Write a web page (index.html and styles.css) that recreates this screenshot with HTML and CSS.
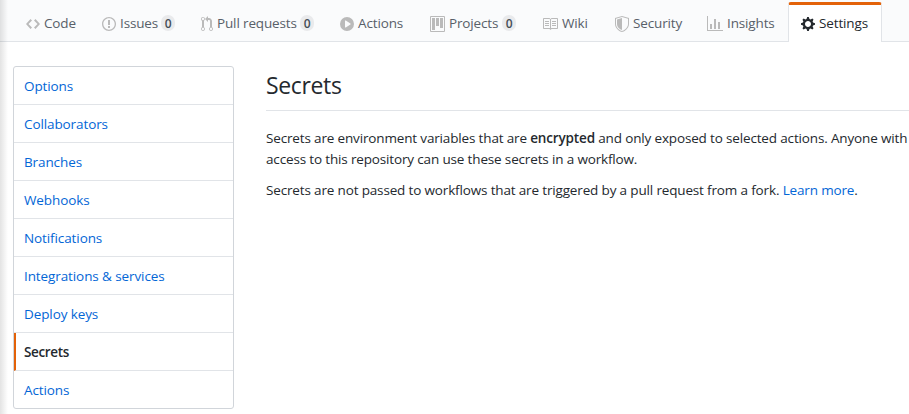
FILE: index.html
```html
<!DOCTYPE html>
<html lang="en">
<head>
<meta charset="utf-8">
<title>Secrets</title>
<link rel="stylesheet" href="styles.css">
</head>
<body>
<nav class="tabs">
  <a class="tab"><svg width="14" height="16" viewBox="0 0 14 16"><path d="M9.5 3L8 4.5 11.5 8 8 11.5 9.5 13 14 8 9.5 3zm-5 0L0 8l4.5 5L6 11.5 2.5 8 6 4.5 4.5 3z"/></svg><span>Code</span></a>
  <a class="tab"><svg width="14" height="16" viewBox="0 0 14 16"><path fill-rule="evenodd" d="M7 2.3c3.14 0 5.7 2.56 5.7 5.7s-2.56 5.7-5.7 5.7A5.71 5.71 0 0 1 1.3 8c0-3.14 2.56-5.7 5.7-5.7zM7 1C3.14 1 0 4.14 0 8s3.14 7 7 7 7-3.14 7-7-3.14-7-7-7zm1 3H6v5h2V4zm0 6H6v2h2v-2z"/></svg><span>Issues</span><b class="count">0</b></a>
  <a class="tab"><svg width="12" height="16" viewBox="0 0 12 16"><path fill-rule="evenodd" d="M11 11.28V5c-.03-.78-.34-1.47-.94-2.06C9.46 2.35 8.78 2.03 8 2H7V0L4 3l3 3V4h1c.27.02.48.11.69.31.21.2.3.42.31.69v6.28A1.993 1.993 0 0 0 10 15a1.993 1.993 0 0 0 1-3.72zm-1 2.92c-.66 0-1.2-.55-1.2-1.2 0-.65.55-1.2 1.2-1.2.65 0 1.2.55 1.2 1.2 0 .65-.55 1.2-1.2 1.2zM4 3c0-1.11-.89-2-2-2a1.993 1.993 0 0 0-1 3.72v6.56A1.993 1.993 0 0 0 2 15a1.993 1.993 0 0 0 1-3.72V4.72c.59-.34 1-.98 1-1.72zm-.8 10c0 .66-.55 1.2-1.2 1.2-.65 0-1.2-.55-1.2-1.2 0-.65.55-1.2 1.2-1.2.65 0 1.2.55 1.2 1.2zM2 4.2C1.34 4.2.8 3.65.8 3c0-.65.55-1.2 1.2-1.2.65 0 1.2.55 1.2 1.2 0 .65-.55 1.2-1.2 1.2z"/></svg><span>Pull requests</span><b class="count">0</b></a>
  <a class="tab"><svg width="14" height="16" viewBox="0 0 14 16"><path fill-rule="evenodd" d="M14 8A7 7 0 1 1 0 8a7 7 0 0 1 14 0zm-8.223 3.482l4.599-3.066a.5.5 0 0 0 0-.832L5.777 4.518A.5.5 0 0 0 5 4.934v6.132a.5.5 0 0 0 .777.416z"/></svg><span>Actions</span></a>
  <a class="tab"><svg width="15" height="16" viewBox="0 0 15 16"><path fill-rule="evenodd" d="M10 12h3V2h-3v10zm-4-2h3V2H6v8zm-4 4h3V2H2v12zm-1 1h13V1H1v14zM14 0H1a1 1 0 0 0-1 1v14a1 1 0 0 0 1 1h13a1 1 0 0 0 1-1V1a1 1 0 0 0-1-1z"/></svg><span>Projects</span><b class="count">0</b></a>
  <a class="tab"><svg width="16" height="16" viewBox="0 0 16 16"><path fill-rule="evenodd" d="M3 5h4v1H3V5zm0 3h4V7H3v1zm0 2h4V9H3v1zm11-5h-4v1h4V5zm0 2h-4v1h4V7zm0 2h-4v1h4V9zm2-6v9c0 .55-.45 1-1 1H9.5l-1 1-1-1H2c-.55 0-1-.45-1-1V3c0-.55.45-1 1-1h5.5l1 1 1-1H15c.55 0 1 .45 1 1zm-8 .5L7.5 3H2v9h6V3.5zm7-.5H9.5l-.5.5V12h6V3z"/></svg><span>Wiki</span></a>
  <a class="tab"><svg width="14" height="16" viewBox="0 0 14 16"><path fill-rule="evenodd" d="M0 2l7-2 7 2v6.02C14 12.69 8.69 16 7 16c-1.69 0-7-3.31-7-7.98V2zm1 .75L7 1l6 1.75v5.268C13 12.104 8.449 15 7 15c-1.449 0-6-2.896-6-6.982V2.75zm1 .75L7 2v12c-1.207 0-5-2.482-5-5.985V3.5z"/></svg><span>Security</span></a>
  <a class="tab"><svg width="16" height="16" viewBox="0 0 16 16"><path d="M16 14v1H0V0h1v14h15zM5 13H3V8h2v5zm4 0H7V3h2v10zm4 0h-2V6h2v7z"/></svg><span>Insights</span></a>
  <a class="tab selected"><svg width="14" height="16" viewBox="0 0 14 16"><path fill-rule="evenodd" d="M14 8.77v-1.6l-1.94-.64-.45-1.09.88-1.84-1.13-1.13-1.81.91-1.09-.45-.69-1.92h-1.6l-.63 1.94-1.11.45-1.84-.88-1.13 1.13.91 1.81-.45 1.09L0 7.23v1.59l1.94.64.45 1.09-.88 1.84 1.13 1.13 1.81-.91 1.09.45.69 1.92h1.59l.63-1.94 1.11-.45 1.84.88 1.13-1.13-.92-1.81.47-1.09L14 8.75v.02zM7 11c-1.66 0-3-1.34-3-3s1.34-3 3-3 3 1.34 3 3-1.34 3-3 3z"/></svg><span>Settings</span></a>
</nav>
<div class="layout">
  <aside class="menu">
    <a>Options</a>
    <a>Collaborators</a>
    <a>Branches</a>
    <a>Webhooks</a>
    <a>Notifications</a>
    <a>Integrations &amp; services</a>
    <a>Deploy keys</a>
    <a class="current">Secrets</a>
    <a>Actions</a>
  </aside>
  <main class="content">
    <h1>Secrets</h1>
    <p>Secrets are environment variables that are <strong>encrypted</strong> and only exposed to selected actions. Anyone with<br>access to this repository can use these secrets in a workflow.</p>
    <p>Secrets are not passed to workflows that are triggered by a pull request from a fork. <a>Learn more</a>.</p>
  </main>
</div>
<div class="edge"></div>
</body>
</html>
```
FILE: styles.css
```css
* { box-sizing: border-box; }
body {
  margin: 0;
  height: 414px;
  overflow: hidden;
  background: #fff;
  color: #24292e;
  font: 13.5px/21px "Open Sans", "Noto Sans", sans-serif;
}
.tabs {
  display: grid;
  grid-template-columns: 76px 99px 139px 90px 112px 73px 92px 94px 94px;
  height: 42px;
  padding: 2px 0 0 13px;
  background: #fafbfc;
  border-bottom: 1px solid #e1e4e8;
  letter-spacing: -0.14px;
}
.tab {
  display: flex;
  height: 40px;
  padding: 0 12px;
  border: 1px solid transparent;
  border-top: 3px solid transparent;
  border-bottom: 0;
  border-radius: 3px 3px 0 0;
  color: #586069;
  white-space: nowrap;
}
.tab svg {
  flex: none;
  margin: 11px 4px 0 0;
  fill: #bababa;
}
.tab span { margin-top: 8px; }
.selected {
  background: #fff;
  border-color: #e36209 #e1e4e8 transparent;
  color: #24292e;
}
.selected svg { fill: #24292e; }
.count {
  width: 14px;
  height: 16px;
  margin: 10px 0 0 auto;
  border-radius: 8px;
  background: #e9eaec;
  color: #444d56;
  font-size: 12px;
  font-weight: 600;
  line-height: 17px;
  text-align: center;
}
.layout {
  display: flex;
  gap: 32px;
  padding: 24px 0 0 13px;
}
.menu {
  flex: none;
  width: 221px;
  height: 343px;
  border: 1px solid #d1d5da;
  border-radius: 3px;
  letter-spacing: -0.1px;
}
.menu a {
  display: block;
  height: 38px;
  padding: 9px 10px 0;
  border-bottom: 1px solid #e1e4e8;
  color: #0366d6;
}
.menu a:last-child { border-bottom: 0; }
.menu .current {
  padding-left: 8px;
  border-left: 2px solid #e36209;
  color: #24292e;
  font-weight: 600;
  letter-spacing: -0.35px;
}
.content {
  flex: none;
  width: 643px;
}
h1 {
  height: 45px;
  margin: 0 0 17px;
  padding-top: 1px;
  border-bottom: 1px solid #e1e4e8;
  font-size: 23px;
  font-weight: 400;
  line-height: 36px;
  letter-spacing: -0.35px;
}
p {
  margin: 0 0 10px;
  letter-spacing: -0.155px;
  white-space: nowrap;
}
p a { color: #0366d6; }
strong { font-weight: 600; }
.edge {
  position: absolute;
  top: 0;
  left: 0;
  width: 8px;
  height: 414px;
  background: linear-gradient(to right, rgba(0,0,0,.11), rgba(0,0,0,0));
}
```
